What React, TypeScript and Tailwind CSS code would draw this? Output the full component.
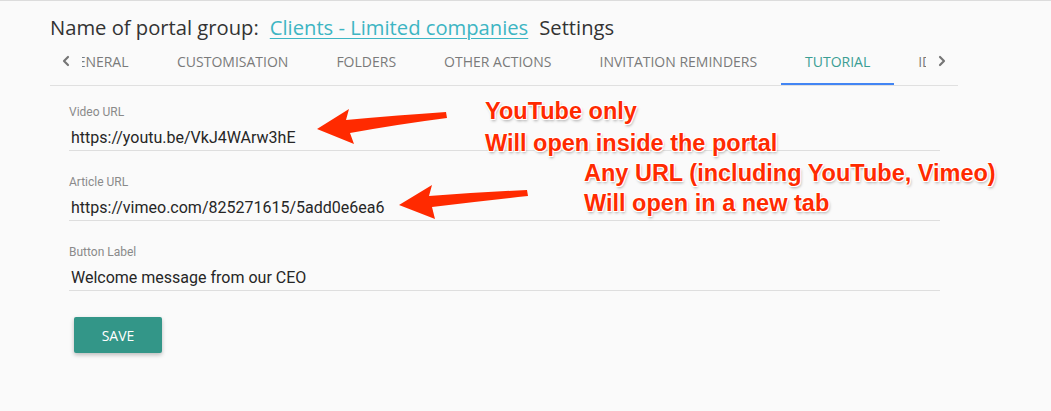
import { ChevronLeft, ChevronRight } from "lucide-react";

const tabs = ["CUSTOMISATION", "FOLDERS", "OTHER ACTIONS", "INVITATION REMINDERS"];

const fields = [
  { label: "Video URL", value: "https://youtu.be/VkJ4WArw3hE" },
  { label: "Article URL", value: "https://vimeo.com/825271615/5add0e6ea6" },
  { label: "Button Label", value: "Welcome message from our CEO" },
];

const outline =
  "[text-shadow:-1px_-1px_0_#fff,1px_-1px_0_#fff,-1px_1px_0_#fff,1px_1px_0_#fff,0_-1px_0_#fff,0_1px_0_#fff,1px_2px_3px_rgba(0,0,0,0.35)]";

export default function App() {
  return (
    <div className="relative w-[1051px] h-[411px] overflow-hidden bg-[#fafafa] border-t border-[#dcdcdc] font-['Open_Sans',sans-serif]">
      <div className="ml-[50px] w-[908px]">
        <div className="mt-[12px] h-[28px] flex items-center text-[20.2px] leading-[28px] text-[#333]">
          <span>Name of portal group:</span>
          <a className="ml-[11px] text-[#3db5c3] underline underline-offset-[3px] decoration-1">
            Clients - Limited companies
          </a>
          <span className="ml-[11px]">Settings</span>
        </div>

        <div className="h-[45px] flex border-b border-[#e0e0e0] text-[14px] text-[#7a7a7a]">
          <div className="w-[32px] flex items-center justify-center pb-[4px] text-[#757575]">
            <ChevronLeft size={16} strokeWidth={3.2} />
          </div>
          <div className="flex-1 overflow-hidden">
            <div className="flex h-full -ml-[39px]">
              <div className="w-[110px] shrink-0 flex items-center justify-center pb-[4px]">GENERAL</div>
              {tabs.map((t) => (
                <div key={t} className="px-6 shrink-0 flex items-center pb-[4px] whitespace-nowrap">
                  {t}
                </div>
              ))}
              <div className="relative w-[113px] shrink-0 flex items-center justify-center pb-[4px] text-[#3a9e94]">
                TUTORIAL
                <div className="absolute left-0 right-0 bottom-0 h-[2px] bg-[#4285f4]" />
              </div>
              <div className="px-6 shrink-0 flex items-center pb-[4px] whitespace-nowrap">IDENTITY</div>
            </div>
          </div>
          <div className="w-[32px] flex items-center justify-center pb-[4px] text-[#757575]">
            <ChevronRight size={16} strokeWidth={3.2} />
          </div>
        </div>

        <div className="ml-[19px] w-[871px] pt-[19px] font-['Roboto',sans-serif]">
          {fields.map((f, i) => (
            <div key={f.label} className={i > 0 ? "mt-[24px]" : ""}>
              <div className="h-[14px] text-[12px] leading-[14px] text-[#8a8a8a]">{f.label}</div>
              <div className="mt-[7px] h-[25px] pl-[2px] text-[16px] leading-[24px] text-[#262626] border-b border-[#dedede]">
                {f.value}
              </div>
            </div>
          ))}
          <button className="mt-[26px] ml-[5px] w-[88px] h-[36px] rounded-[2px] bg-[#339688] text-white text-[14px] font-['Open_Sans',sans-serif] shadow-[0_2px_4px_rgba(0,0,0,0.25)]">
            SAVE
          </button>
        </div>
      </div>

      <svg className="absolute left-0 top-0 pointer-events-none" width="1051" height="411">
        <path d="M317 128 L349 108 L346 119 Q400 114 446 111 L447 117 Q400 123 350 132 L354 143 Z" fill="#ff2a00" />
        <path d="M399 204 L432 184 L429 195 Q480 191 527 189 L528 195 Q480 200 432 206 L435 218 Z" fill="#ff2a00" />
      </svg>

      <div className={`absolute left-[485px] top-[94px] text-[#ff2a00] font-bold text-[23.5px] leading-[32px] font-['Liberation_Sans',Arial,sans-serif] ${outline}`}>
        <div>YouTube only</div>
        <div>Will open inside the portal</div>
      </div>
      <div className={`absolute left-[584px] top-[157px] text-[#ff2a00] font-bold text-[23.5px] leading-[30px] font-['Liberation_Sans',Arial,sans-serif] ${outline}`}>
        <div>Any URL (including YouTube, Vimeo)</div>
        <div>Will open in a new tab</div>
      </div>
    </div>
  );
}
